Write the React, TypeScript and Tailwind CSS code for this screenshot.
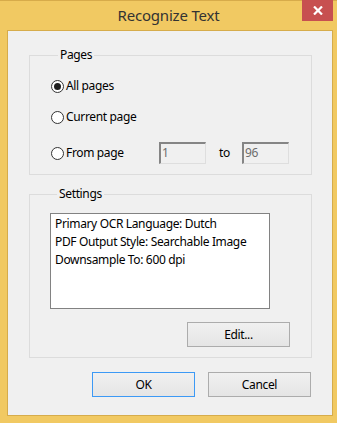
import React from "react";

const font = { fontFamily: '"Noto Sans", "Open Sans", sans-serif' };

const Radio = ({ checked, label }: { checked?: boolean; label: string }) => (
  <div className="flex items-center h-[20px]">
    <span className="w-[13px] h-[13px] rounded-full border border-[#333333] bg-white flex items-center justify-center">
      {checked && <span className="w-[7px] h-[7px] rounded-full bg-[#1f1f1f]" />}
    </span>
    <span className="ml-[2px]">{label}</span>
  </div>
);

const Field = ({ value }: { value: string }) => (
  <div className="w-[47px] h-[22px] border-t-2 border-l-2 border-r border-b border-t-[#858585] border-l-[#858585] border-r-[#dedede] border-b-[#dedede] bg-[#f0f0f0] text-[#6d6d6d] pl-[1px] leading-[18px]">
    {value}
  </div>
);

const Button = ({ children, focused }: { children: React.ReactNode; focused?: boolean }) => (
  <button
    className={`w-[103px] h-[25px] border bg-gradient-to-b from-[#f0f0f0] to-[#e5e5e5] text-black ${
      focused ? "border-[#3c99f5]" : "border-[#acacac]"
    }`}
  >
    {children}
  </button>
);

export default function App() {
  return (
    <div
      className="w-[337px] h-[423px] bg-[#f1c962] border-t border-[#d7ab4a] flex flex-col text-[12px] tracking-[-0.35px] text-black"
      style={font}
    >
      {/* title bar */}
      <div className="relative h-[29px] flex items-center justify-center">
        <span className="text-[15px] tracking-[-0.2px] text-[#333333]">Recognize Text</span>
        <div className="absolute -top-px right-[4px] w-[31px] h-[21px] bg-[#c75050] flex items-center justify-center">
          <svg width="10" height="9" viewBox="0 0 10 9">
            <path d="M1 0.5 L9 8.5 M9 0.5 L1 8.5" stroke="white" strokeWidth="2.2" />
          </svg>
        </div>
      </div>

      {/* client area */}
      <div className="ml-[7px] w-[326px] h-[386px] border border-[#d6ac4b] bg-[#f0f0f0] flex flex-col">
        <fieldset className="mt-[16px] ml-[21px] w-[283px] border border-[#dcdcdc] pl-[21px] pb-[10px]">
          <legend className="ml-[7px] px-[2px] leading-[16px]">Pages</legend>
          <div className="mt-[13px]">
            <Radio checked label="All pages" />
          </div>
          <div className="mt-[11px]">
            <Radio label="Current page" />
          </div>
          <div className="mt-[15px] flex items-center h-[22px]">
            <div className="w-[108px]">
              <Radio label="From page" />
            </div>
            <Field value="1" />
            <span className="ml-[13px] w-[23px]">to</span>
            <Field value="96" />
          </div>
        </fieldset>

        <fieldset className="mt-[11px] ml-[21px] w-[283px] border border-[#dcdcdc] pl-[20px] pb-[10px]">
          <legend className="ml-[7px] px-[2px] leading-[16px]">Settings</legend>
          <div className="mt-[11px] w-[220px] h-[96px] border border-[#828282] bg-white pl-[4px] pt-[1px] leading-[18px]">
            <div>Primary OCR Language: Dutch</div>
            <div>PDF Output Style: Searchable Image</div>
            <div>Downsample To: 600 dpi</div>
          </div>
          <div className="mt-[13px] flex justify-end pr-[21px]">
            <Button>Edit...</Button>
          </div>
        </fieldset>

        <div className="mt-[14px] flex justify-end gap-[13px] pr-[21px]">
          <Button focused>OK</Button>
          <Button>Cancel</Button>
        </div>
      </div>
    </div>
  );
}
